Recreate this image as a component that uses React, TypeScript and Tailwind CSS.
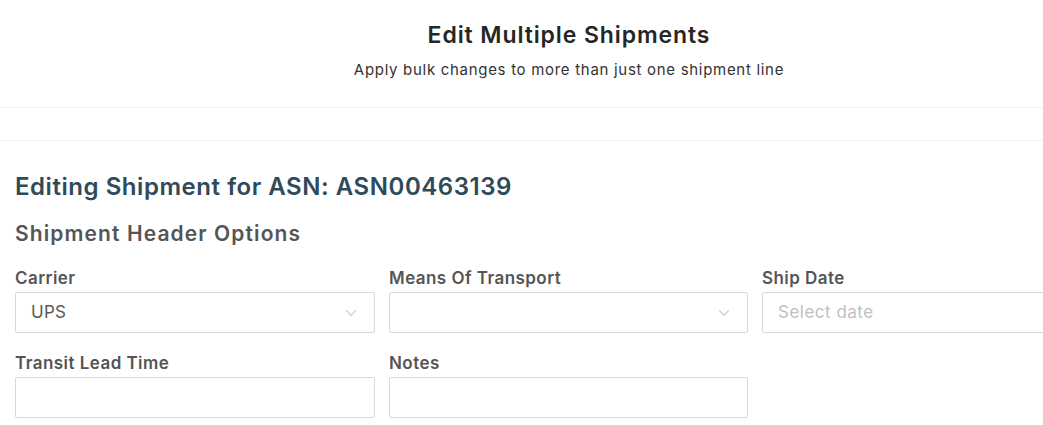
import React from "react";

function Chevron() {
  return (
    <svg width="12" height="12" viewBox="0 0 12 12" fill="none" className="shrink-0">
      <path d="M1.5 3.5L6 8.5L10.5 3.5" stroke="#bfbfbf" strokeWidth="1.1" strokeLinecap="round" strokeLinejoin="round" />
    </svg>
  );
}

function Field({ label, children }: { label: string; children: React.ReactNode }) {
  return (
    <div className="flex flex-col">
      <label className="text-[17px] leading-[20px] font-semibold tracking-[0.45px] text-[#555555] mb-[4px]">{label}</label>
      {children}
    </div>
  );
}

function SelectBox({ value }: { value?: string }) {
  return (
    <div className="h-[41px] w-full rounded-[2px] border border-[#d9d9d9] bg-white flex items-center justify-between pl-[15px] pr-[17px]">
      <span className="text-[17px] tracking-[0.3px] text-[#595959]">{value ?? ""}</span>
      <Chevron />
    </div>
  );
}

function InputBox({ placeholder }: { placeholder?: string }) {
  return (
    <div className="h-[41px] w-full rounded-[2px] border border-[#d9d9d9] bg-white flex items-center pl-[15px]">
      <span className="text-[17px] tracking-[0.5px] text-[#bfbfbf]">{placeholder ?? ""}</span>
    </div>
  );
}

export default function App() {
  return (
    <div className="w-[1043px] h-[425px] overflow-hidden bg-white" style={{ fontFamily: "Inter, 'Noto Sans', sans-serif" }}>
      <div className="w-[1138px]">
        <div className="flex flex-col items-center pt-[20px]">
          <h1 className="text-[23px] leading-[30px] font-semibold tracking-[0.9px] text-[#262626]">Edit Multiple Shipments</h1>
          <p className="mt-[10px] text-[15px] leading-[20px] tracking-[0.7px] text-[#333333]">Apply bulk changes to more than just one shipment line</p>
        </div>
        <div className="mt-[27px] border-t border-[#f0f0f0]" />
        <div className="mt-[32px] border-t border-[#f0f0f0]" />
        <div className="px-[15px] pt-[31px]">
          <h2 className="text-[24px] leading-[30px] font-semibold tracking-[0.55px] text-[#2f4a59]">Editing Shipment for ASN: ASN00463139</h2>
          <h3 className="mt-[19px] text-[21px] leading-[26px] font-semibold tracking-[1.1px] text-[#555555]">Shipment Header Options</h3>
          <div className="mt-[21px] grid grid-cols-[360px_359px_360px] gap-x-[14px] gap-y-[20px]">
            <Field label="Carrier">
              <SelectBox value="UPS" />
            </Field>
            <Field label="Means Of Transport">
              <SelectBox />
            </Field>
            <Field label="Ship Date">
              <InputBox placeholder="Select date" />
            </Field>
            <Field label="Transit Lead Time">
              <InputBox />
            </Field>
            <Field label="Notes">
              <InputBox />
            </Field>
          </div>
        </div>
      </div>
    </div>
  );
}
